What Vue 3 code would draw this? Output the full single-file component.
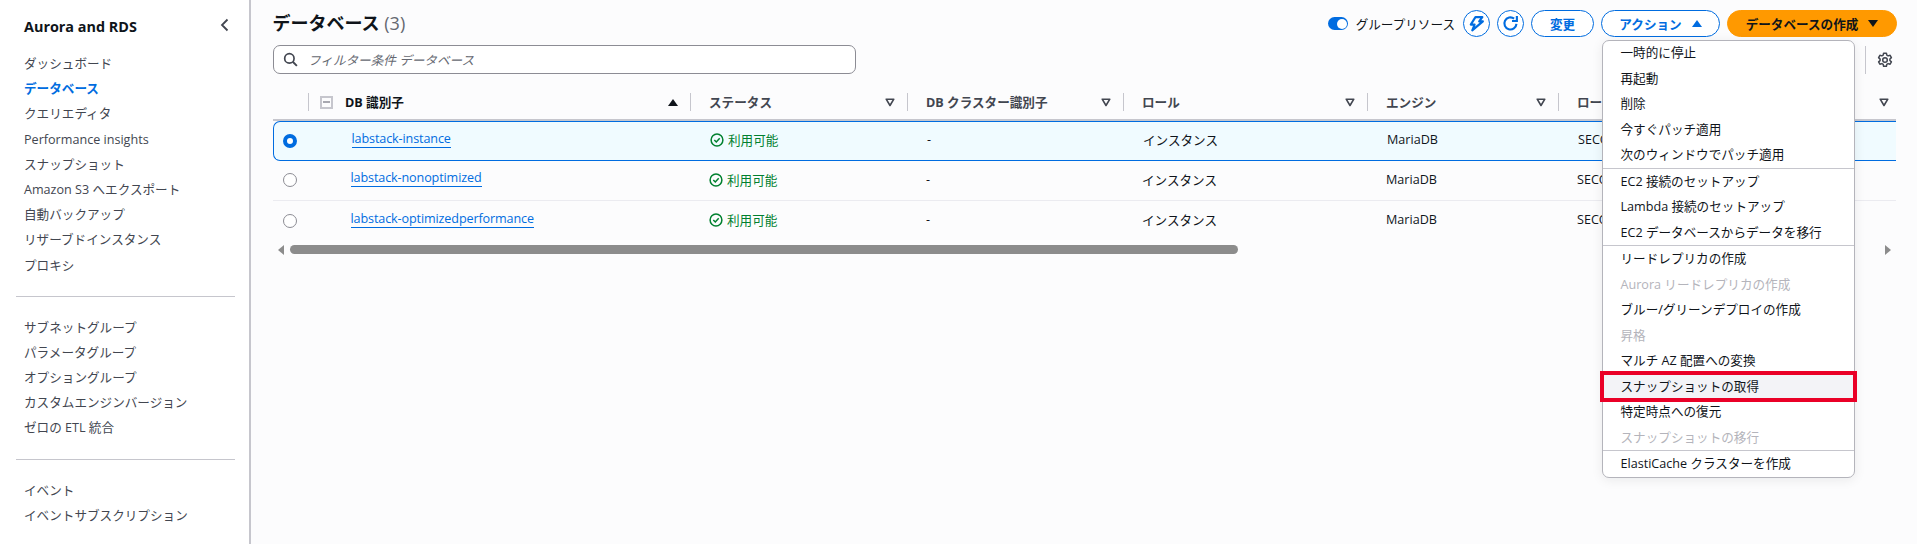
<script setup>
const navGroups = [
  ['ダッシュボード', 'データベース', 'クエリエディタ', 'Performance insights', 'スナップショット', 'Amazon S3 へエクスポート', '自動バックアップ', 'リザーブドインスタンス', 'プロキシ'],
  ['サブネットグループ', 'パラメータグループ', 'オプショングループ', 'カスタムエンジンバージョン', 'ゼロの ETL 統合'],
  ['イベント', 'イベントサブスクリプション'],
]
const rows = [
  { name: 'labstack-instance', selected: true },
  { name: 'labstack-nonoptimized', selected: false },
  { name: 'labstack-optimizedperformance', selected: false },
]
const columns = ['ステータス', 'DB クラスター識別子', 'ロール', 'エンジン', 'ロー']
const menuGroups = [
  [
    { t: '一時的に停止' }, { t: '再起動' }, { t: '削除' }, { t: '今すぐパッチ適用' }, { t: '次のウィンドウでパッチ適用' },
  ],
  [
    { t: 'EC2 接続のセットアップ' }, { t: 'Lambda 接続のセットアップ' }, { t: 'EC2 データベースからデータを移行' },
  ],
  [
    { t: 'リードレプリカの作成' }, { t: 'Aurora リードレプリカの作成', off: true }, { t: 'ブルー/グリーンデプロイの作成' },
    { t: '昇格', off: true }, { t: 'マルチ AZ 配置への変換' }, { t: 'スナップショットの取得', mark: true },
    { t: '特定時点への復元' }, { t: 'スナップショットの移行', off: true },
  ],
  [{ t: 'ElastiCache クラスターを作成' }],
]
</script>

<template>
  <div class="page">
    <aside class="side">
      <div class="side-head">
        <span class="side-title">Aurora and RDS</span>
        <svg class="side-close" width="12" height="14" viewBox="0 0 12 14"><path d="M8.5 1.5 3 7l5.5 5.5" fill="none" stroke="#424650" stroke-width="1.8"/></svg>
      </div>
      <template v-for="(group, gi) in navGroups" :key="gi">
        <hr v-if="gi" class="side-rule" />
        <ul class="nav">
          <li v-for="item in group" :key="item" :class="{ active: item === 'データベース' }">{{ item }}</li>
        </ul>
      </template>
    </aside>

    <main class="main">
      <header class="head">
        <h1 class="title">データベース <span class="count">(3)</span></h1>
        <div class="actions">
          <span class="toggle"><i></i></span>
          <span class="toggle-label">グループリソース</span>
          <button class="btn round">
            <svg width="17" height="17" viewBox="0 0 16 16"><path d="M7 2h6.5l-3 4H14L4 14.5 6.2 9H2.6z" fill="none" stroke="#006ce0" stroke-width="2" stroke-linejoin="round"/></svg>
          </button>
          <button class="btn round">
            <svg width="17" height="17" viewBox="0 0 16 16"><path d="M13.6 8.4A5.7 5.7 0 1 1 11.4 3.4" fill="none" stroke="#006ce0" stroke-width="2"/><path d="M14 1v4.6H9.4" fill="none" stroke="#006ce0" stroke-width="2"/></svg>
          </button>
          <button class="btn change">変更</button>
          <button class="btn action">アクション <span class="tri up"></span></button>
          <button class="btn create">データベースの作成 <span class="tri down"></span></button>
        </div>
      </header>

      <div class="tools">
        <label class="search">
          <svg width="15" height="15" viewBox="0 0 16 16"><circle cx="6.8" cy="6.8" r="5" fill="none" stroke="#424650" stroke-width="1.8"/><path d="m10.4 10.4 4.4 4.4" stroke="#424650" stroke-width="2"/></svg>
          <span class="placeholder">フィルター条件 データベース</span>
        </label>
        <div class="prefs">
          <svg width="16" height="16" viewBox="0 0 16 16"><path d="M6.6 1.2h2.8l.4 2 1.3.7 2-.6 1.3 2.3-1.5 1.4v1.5l1.5 1.4-1.3 2.3-2-.6-1.3.7-.4 2H6.6l-.4-2-1.3-.7-2 .6-1.3-2.3L3.1 8.600V7.100L1.600 5.600l1.300-2.300 2 .6 1.300-.7z" fill="none" stroke="#424650" stroke-width="1.500" stroke-linejoin="round"/><circle cx="8" cy="8" r="2.300" fill="none" stroke="#424650" stroke-width="1.500"/></svg>
        </div>
      </div>

      <section class="table">
        <div class="grid thead">
          <div class="th"></div>
          <div class="th">
            <span class="sep"></span>
            <span class="indet"><i></i></span>
            <span class="th-label sorted">DB 識別子</span>
            <span class="sort-up"></span>
          </div>
          <div v-for="(col, i) in columns" :key="i" class="th" :class="{ last: i === 4 }">
            <span class="sep"></span>
            <span class="th-label">{{ col }}</span>
            <svg class="sort" width="10" height="9" viewBox="0 0 10 9"><path d="M1.200 1.200h7.600L5 7.500z" fill="none" stroke="#424650" stroke-width="1.600" stroke-linejoin="round"/></svg>
          </div>
        </div>
        <div v-for="row in rows" :key="row.name" class="grid row" :class="{ selected: row.selected }">
          <div class="td radio-cell"><span class="radio" :class="{ on: row.selected }"></span></div>
          <div class="td name-cell"><a class="link">{{ row.name }}</a></div>
          <div class="td status">
            <svg width="14" height="14" viewBox="0 0 14 14"><circle cx="7" cy="7" r="5.900" fill="none" stroke="#00802f" stroke-width="1.500"/><path d="m4.300 7 2 2 3.400-3.800" fill="none" stroke="#00802f" stroke-width="1.500"/></svg>
            利用可能
          </div>
          <div class="td">-</div>
          <div class="td">インスタンス</div>
          <div class="td">MariaDB</div>
          <div class="td">SECO</div>
        </div>
        <div class="scroll">
          <span class="arrow left"></span>
          <span class="thumb"></span>
          <span class="arrow right"></span>
        </div>
      </section>

      <div class="menu">
        <div v-for="(group, gi) in menuGroups" :key="gi" class="menu-group">
          <div v-for="item in group" :key="item.t" class="menu-item" :class="{ off: item.off, mark: item.mark }">{{ item.t }}</div>
        </div>
      </div>
    </main>
  </div>
</template>

<style>
html, body { margin: 0; background: #fff; }
</style>

<style scoped>
.page {
  width: 1917px;
  height: 544px;
  display: flex;
  overflow: hidden;
  background: #fcfcfd;
  color: #0f141a;
  font-family: "Open Sans", "Noto Sans CJK JP", sans-serif;
  font-size: 12.600px;
}
.side {
  width: 250px;
  flex: none;
  box-sizing: border-box;
  background: #fff;
  border-right: 1px solid #c6c6cd;
  box-shadow: 1px 0 0 #c6c6cd;
  padding: 17px 14px 0 16px;
}
.side-head {
  display: flex;
  align-items: center;
  justify-content: space-between;
  padding: 0 4px 0 8px;
  height: 19px;
  margin-bottom: 15px;
}
.side-title { font-size: 14.400px; font-weight: 700; color: #0f141a; }
.side-close { margin-top: -3px; }
.nav { list-style: none; margin: 0; padding: 0 0 0 8px; color: #424650; }
.nav li { height: 25.200px; line-height: 25.200px; white-space: nowrap; }
.nav li.active { color: #006ce0; font-weight: 700; }
.side-rule { border: 0; border-top: 1px solid #c6c6cd; margin: 18.500px 0 17.500px; }

.main { flex: 1; position: relative; padding: 10px 20px 0 23px; min-width: 0; }
.head { display: flex; justify-content: space-between; align-items: center; height: 27px; }
.title { margin: 0 0 0 -0.500px; font-size: 18px; font-weight: 700; line-height: 27px; }
.count { font-weight: 400; color: #656871; }
.actions { display: flex; align-items: center; }
.toggle {
  width: 20px; height: 13px; border-radius: 7px; background: #006ce0;
  display: flex; align-items: center; justify-content: flex-end; padding-right: 1px; box-sizing: border-box;
}
.toggle i { width: 10px; height: 10px; border-radius: 50%; background: #fff; }
.toggle-label { margin: 0 8px 0 8px; color: #0f141a; white-space: nowrap; }
.btn {
  height: 27px; box-sizing: border-box; border: 1px solid #006ce0; border-radius: 14px; background: #fff;
  color: #006ce0; font: inherit; font-weight: 700; padding: 0; margin: 0 0 0 7px;
  display: flex; align-items: center; justify-content: center; white-space: nowrap;
}
.btn.round { width: 27px; }
.btn.round:first-of-type { margin-left: 0; }
.btn.change { width: 63px; }
.btn.action { width: 119px; }
.btn.create { width: 170px; background: #ff9900; border-color: #ff9900; color: #0f141a; }
.tri { width: 0; height: 0; border-left: 5px solid transparent; border-right: 5px solid transparent; margin-left: 10px; }
.tri.up { border-bottom: 7px solid #006ce0; }
.tri.down { border-top: 7px solid #0f141a; }

.tools { display: flex; align-items: center; height: 29px; margin-top: 8px; position: relative; }
.search {
  width: 583px; height: 29px; box-sizing: border-box; border: 1px solid #8c8c94; border-radius: 7px; background: #fff;
  display: flex; align-items: center; padding-left: 9px; gap: 10px;
}
.placeholder { color: #656871; font-style: italic; }
.prefs {
  margin-left: auto; height: 28px; border-left: 1px solid #c6c6cd; padding: 0 4px 0 11px;
  display: flex; align-items: center;
}

.table { margin-top: 11px; width: 1622.500px; }
.grid { display: grid; grid-template-columns: 35px 382px 217px 216px 244px 191px 337.500px; }
.thead { height: 35.500px; box-sizing: border-box; border-bottom: 2px solid #c6c6cd; }
.th { display: flex; align-items: center; height: 18px; margin-top: 8px; color: #424650; font-weight: 700; padding-right: 12px; white-space: nowrap; }
.th.last { padding-right: 7px; }
.sep { width: 1px; height: 18px; background: #c6c6cd; margin-right: 18px; flex: none; }
.th-label { flex: 1; padding-bottom: 2px; }
.th-label.sorted { color: #0f141a; }
.indet { width: 13px; height: 13px; box-sizing: border-box; border: 2px solid #c6c6cd; display: flex; align-items: center; justify-content: center; margin: 0 12px 0 -7px; flex: none; }
.indet i { width: 7px; height: 1.500px; background: #a8a8b0; }
.sort-up { width: 0; height: 0; border-left: 5px solid transparent; border-right: 5px solid transparent; border-bottom: 7px solid #0f141a; }

.row { height: 40px; box-sizing: border-box; border-bottom: 1px solid #ebebf0; }
.row:nth-last-child(2) { border-bottom: 0; }
.row.selected { background: #f0fbff; border: 1px solid #006ce0; border-right: 0; border-radius: 7px 0 0 7px; }
.td { display: flex; align-items: center; padding-left: 19px; padding-bottom: 2px; white-space: nowrap; overflow: hidden; }
.radio-cell { padding-left: 9.500px; padding-bottom: 0; }
.selected .radio-cell { padding-left: 8.500px; }
.radio { width: 14px; height: 14px; box-sizing: border-box; border: 1.500px solid #8c8c94; border-radius: 50%; background: #fff; }
.radio.on { border: 4.500px solid #006ce0; }
.name-cell { padding-left: 42.500px; padding-bottom: 2px; }
.link { color: #006ce0; border-bottom: 1px solid #006ce0; line-height: 16px; margin-top: -1px; letter-spacing: -0.120px; }
.status { color: #00802f; gap: 4px; }
.status svg { margin-top: 1px; }
.scroll { display: flex; align-items: center; height: 9px; margin-top: 4.500px; }
.arrow { width: 0; height: 0; border-top: 5px solid transparent; border-bottom: 5px solid transparent; flex: none; }
.arrow.left { border-right: 6px solid #8c8c8c; margin-left: 5px; }
.arrow.right { border-left: 6px solid #8c8c8c; margin-left: auto; margin-right: 5px; }
.thumb { width: 948px; height: 9px; border-radius: 5px; background: #8c8c8c; margin-left: 6px; }

.menu {
  position: absolute; left: 1351.500px; top: 40px; width: 253px; box-sizing: border-box;
  background: #fff; border: 1px solid #b4b4bb; border-radius: 7px;
  box-shadow: 0 2px 12px rgba(15, 20, 26, 0.08); z-index: 5;
}
.menu-group:first-child { margin-top: -1px; }
.menu-group + .menu-group { border-top: 1px solid #c6c6cd; }
.menu-item { height: 25.500px; line-height: 25.500px; padding-left: 18px; color: #0f141a; white-space: nowrap; }
.menu-item.off { color: #b4b4bb; }
.menu-item.mark {
  background: #f3f3f7; outline: 4px solid #ea0027; outline-offset: -1px; position: relative;
}
</style>
